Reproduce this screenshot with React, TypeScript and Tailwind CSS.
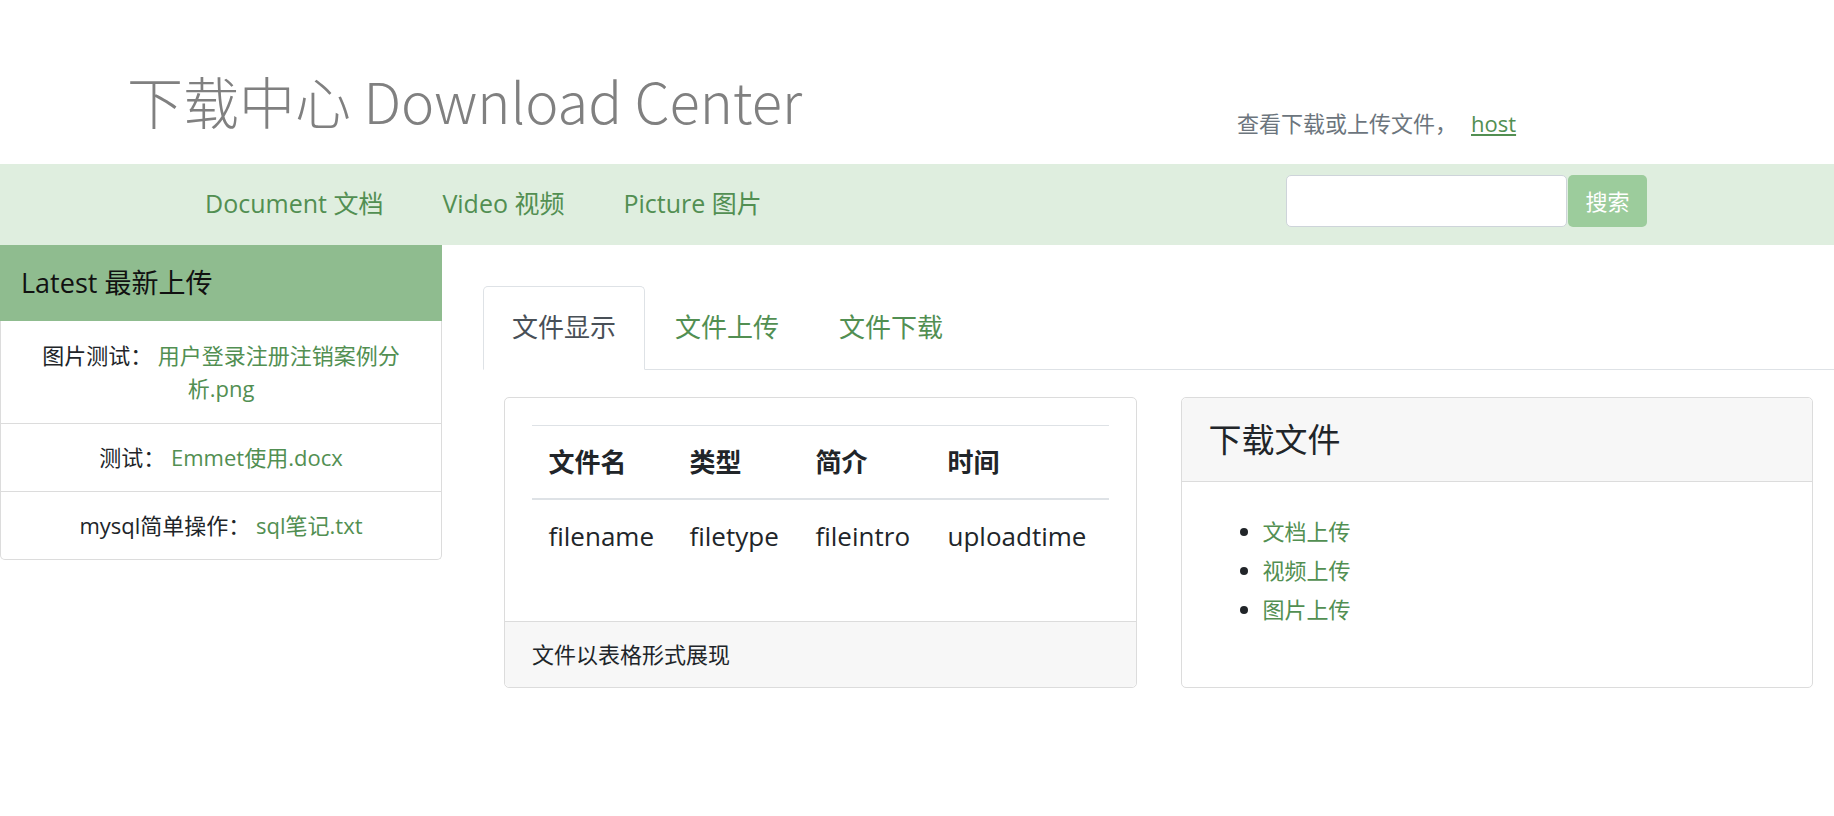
export default function App() {
  const green = "text-[#528f52]";
  return (
    <div className="min-h-screen bg-white font-['Open_Sans','Noto_Sans_CJK_SC',sans-serif] text-[#212529]">
      {/* header */}
      <header className="flex h-[164px]">
        <div className="w-[1237px] pl-[127px] pt-[66px]">
          <h1 className="font-['Noto_Sans_CJK_SC',sans-serif] text-[56px] leading-[67px] font-light text-[#808080]">
            下载中心 Download Center
          </h1>
        </div>
        <div className="pt-[107px] text-[22px] leading-[33px] text-[#6c757d]">
          查看下载或上传文件，
          <a href="#" className={`ml-[14px] underline ${green}`}>
            host
          </a>
        </div>
      </header>

      {/* nav */}
      <nav className="flex h-[81px] items-start bg-[#dfeedf]">
        <div className="flex w-[1286px] gap-[59px] pl-[205px] pt-[21px] text-[25px] leading-[37px]">
          <a href="#" className={green}>Document 文档</a>
          <a href="#" className={green}>Video 视频</a>
          <a href="#" className={green}>Picture 图片</a>
        </div>
        <div className="mt-[11px] flex">
          <input className="h-[52px] w-[281px] rounded-[5px] border border-[#ced4da] bg-white px-3" />
          <button className="ml-[1px] h-[52px] w-[79px] rounded-[5px] bg-[#9ccc9c] text-[22px] text-white">
            搜索
          </button>
        </div>
      </nav>

      <div className="flex">
        {/* sidebar */}
        <aside className="w-[442px] shrink-0">
          <div className="flex h-[76px] items-center bg-[#8fbc8f] px-[21px] text-[27px] text-[#111]">
            Latest 最新上传
          </div>
          <ul className="rounded-b-[5px] border border-t-0 border-[#dcdcdc] text-center text-[22px] leading-[33px]">
            <li className="border-b border-[#dcdcdc] px-[27px] pt-[18px] pb-[18px]">
              图片测试：{" "}
              <a href="#" className={green}>用户登录注册注销案例分析.png</a>
            </li>
            <li className="border-b border-[#dcdcdc] px-[27px] py-[17px]">
              测试：{" "}
              <a href="#" className={green}>Emmet使用.docx</a>
            </li>
            <li className="px-[27px] py-[17px]">
              mysql简单操作：{" "}
              <a href="#" className={green}>sql笔记.txt</a>
            </li>
          </ul>
        </aside>

        {/* main */}
        <main className="flex-1 pl-[41px] pt-[41px]">
          <div className="flex border-b border-[#dee2e6] text-[26px] leading-[39px]">
            <div className="-mb-px rounded-t-[5px] border border-[#dee2e6] border-b-white bg-white px-[28px] py-[21px] text-[#495057]">
              文件显示
            </div>
            <a href="#" className={`border border-transparent px-[29px] py-[21px] ${green}`}>文件上传</a>
            <a href="#" className={`border border-transparent px-[29px] py-[21px] ${green}`}>文件下载</a>
          </div>

          <div className="grid grid-cols-2 gap-[44px] px-[21px] pt-[27px]">
            <div className="flex flex-col rounded-[5px] border border-[#dcdcdc]">
              <div className="p-[27px] pb-[49px]">
                <table className="w-full text-left text-[26px] leading-[39px]">
                  <thead>
                    <tr>
                      <th className="w-[141px] border-t border-b-2 border-[#dee2e6] p-[16.5px] font-bold">文件名</th>
                      <th className="w-[126px] border-t border-b-2 border-[#dee2e6] p-[16.5px] font-bold">类型</th>
                      <th className="w-[132px] border-t border-b-2 border-[#dee2e6] p-[16.5px] font-bold">简介</th>
                      <th className="border-t border-b-2 border-[#dee2e6] p-[16.5px] font-bold">时间</th>
                    </tr>
                  </thead>
                  <tbody>
                    <tr>
                      <td className="p-[16.5px]">filename</td>
                      <td className="p-[16.5px]">filetype</td>
                      <td className="p-[16.5px]">fileintro</td>
                      <td className="p-[16.5px]">uploadtime</td>
                    </tr>
                  </tbody>
                </table>
              </div>
              <div className="mt-auto rounded-b-[5px] border-t border-[#dcdcdc] bg-[#f7f7f7] px-[27px] py-[16px] text-[22px] leading-[33px]">
                文件以表格形式展现
              </div>
            </div>

            <div className="flex flex-col rounded-[5px] border border-[#dcdcdc]">
              <div className="rounded-t-[5px] border-b border-[#dcdcdc] bg-[#f7f7f7] px-[27px] py-[20px] text-[33px] leading-[43px]">
                下载文件
              </div>
              <div className="px-[27px] pt-[30px]">
                <ul className="list-disc pl-[54px] text-[22px] leading-[39px]">
                  <li><a href="#" className={green}>文档上传</a></li>
                  <li><a href="#" className={green}>视频上传</a></li>
                  <li><a href="#" className={green}>图片上传</a></li>
                </ul>
              </div>
            </div>
          </div>
        </main>
      </div>
    </div>
  );
}
